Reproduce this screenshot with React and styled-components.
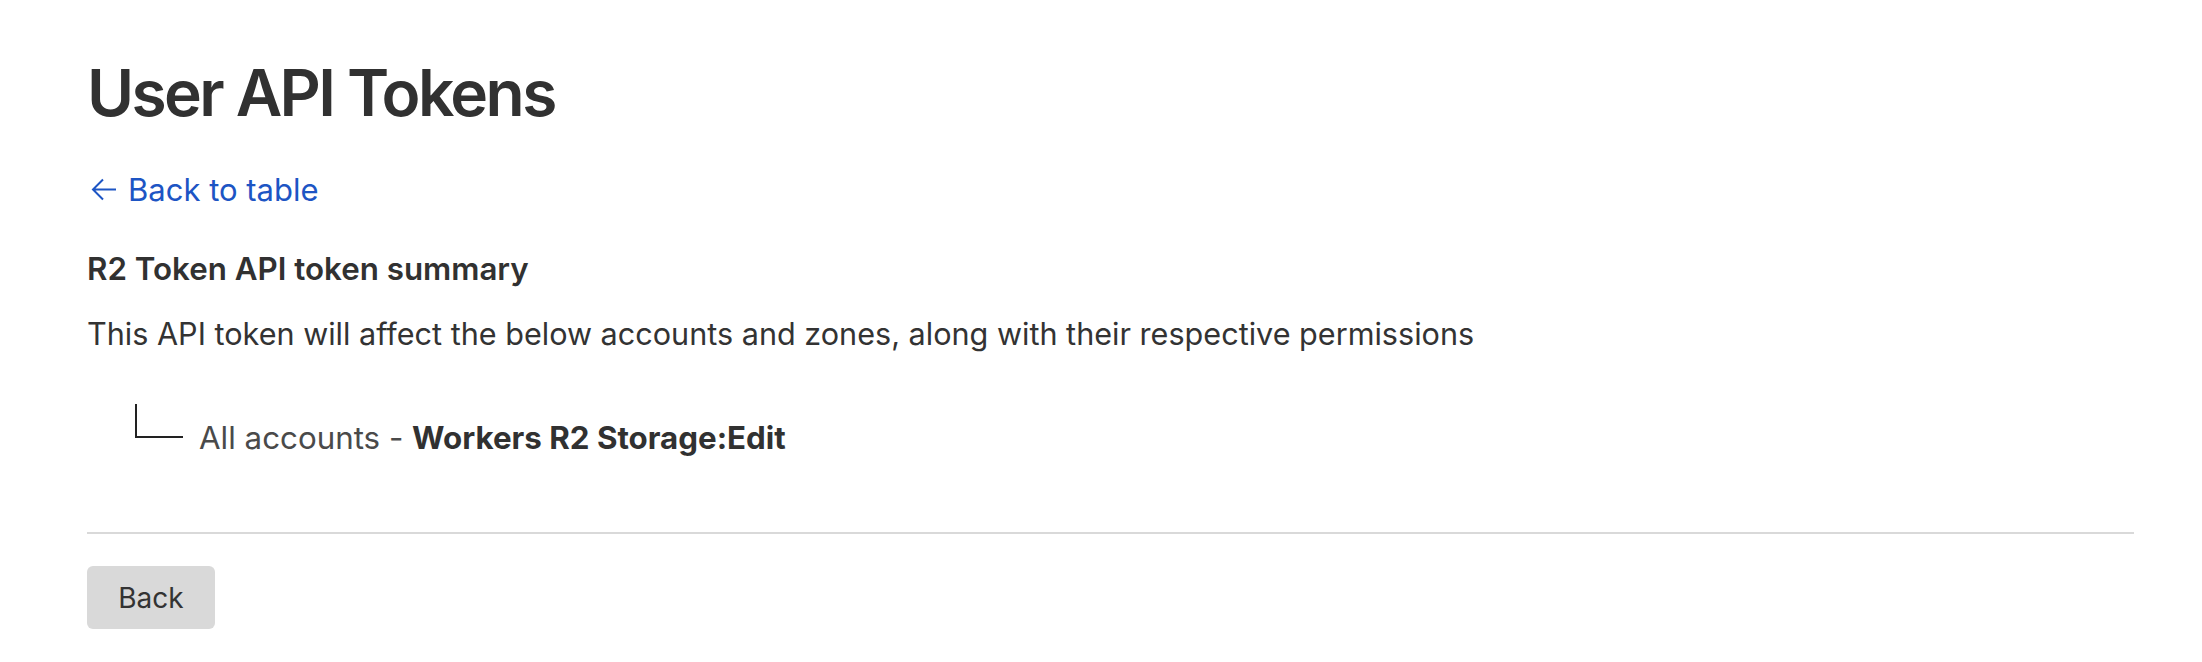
import React from "react";
import styled, { createGlobalStyle } from "styled-components";

const GlobalStyle = createGlobalStyle`
  body {
    margin: 0;
    background: #fff;
    font-family: "Inter", "Noto Sans", sans-serif;
    color: #333;
  }
`;

const Page = styled.div`
  padding: 53px 68px 40px 87px;
  display: flex;
  flex-direction: column;
  align-items: flex-start;
`;

const Title = styled.h1`
  margin: 0;
  font-size: 64px;
  line-height: 80px;
  font-weight: 600;
  color: #313131;
  letter-spacing: -2.6px;
`;

const BackLink = styled.a`
  margin-top: 34px;
  display: inline-flex;
  align-items: center;
  gap: 12px;
  font-size: 31px;
  line-height: 45px;
  color: #1d55c4;
  text-decoration: none;
  cursor: pointer;

  svg {
    margin-left: 4px;
  }
`;

const SummaryTitle = styled.h2`
  margin: 35px 0 0;
  font-size: 31.3px;
  line-height: 45px;
  font-weight: 600;
  color: #313131;
`;

const Description = styled.p`
  margin: 19px 0 0;
  font-size: 30.6px;
  line-height: 45px;
  color: #333;
`;

const TreeRow = styled.div`
  margin-top: 48px;
  padding-left: 48px;
  display: flex;
  align-items: flex-end;
  gap: 16px;
`;

const Connector = styled.span`
  width: 46px;
  height: 32px;
  margin-bottom: 23px;
  border-left: 2px solid #222;
  border-bottom: 2px solid #222;
`;

const TreeText = styled.span`
  font-size: 31.3px;
  line-height: 45px;
  color: #4a4a4a;

  strong {
    font-weight: 700;
    color: #313131;
  }
`;

const Divider = styled.hr`
  align-self: stretch;
  margin: 71px 0 0;
  border: none;
  height: 2px;
  background: #d9d9d9;
`;

const Button = styled.button`
  margin-top: 32px;
  width: 128px;
  height: 63px;
  border: none;
  border-radius: 6px;
  background: #d9d9d9;
  color: #333;
  font-family: inherit;
  font-size: 28px;
  cursor: pointer;
`;

const ArrowLeft = () => (
  <svg width="25" height="23" viewBox="0 0 25 23" fill="none" stroke="currentColor" strokeWidth="2">
    <path d="M25 11.5H2M12 1.5L2 11.5l10 10" />
  </svg>
);

export default function App() {
  return (
    <>
      <GlobalStyle />
      <Page>
        <Title>User API Tokens</Title>
        <BackLink>
          <ArrowLeft />
          Back to table
        </BackLink>
        <SummaryTitle>R2 Token API token summary</SummaryTitle>
        <Description>
          This API token will affect the below accounts and zones, along with their respective permissions
        </Description>
        <TreeRow>
          <Connector />
          <TreeText>
            All accounts - <strong>Workers R2 Storage:Edit</strong>
          </TreeText>
        </TreeRow>
        <Divider />
        <Button>Back</Button>
      </Page>
    </>
  );
}
